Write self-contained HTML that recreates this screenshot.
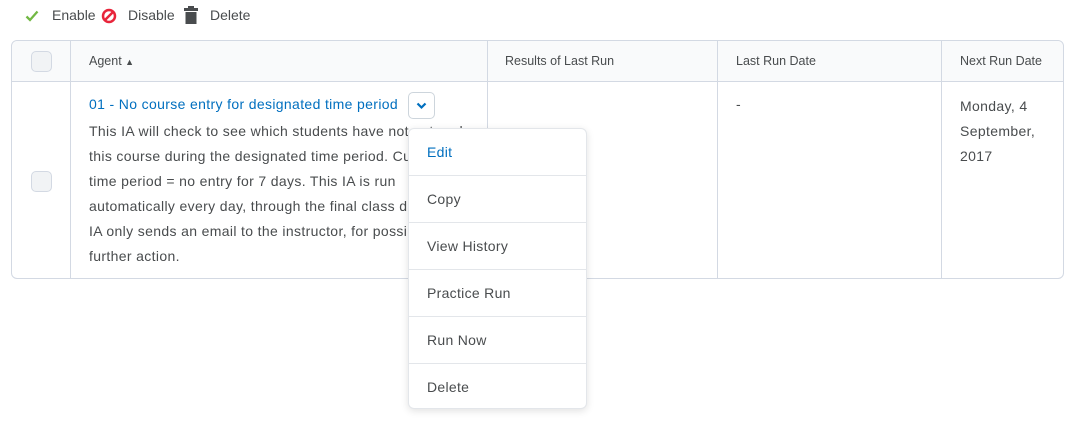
<!DOCTYPE html>
<html><head><style>
body{margin:0;width:1078px;height:425px;background:#fff;font-family:"Liberation Sans",sans-serif;color:#494c4e;position:relative;overflow:hidden;font-size:14px}
.a{position:absolute;white-space:nowrap}
.tb{position:absolute;left:11px;top:40px;width:1051px;height:237px;border:1px solid #d3d9e3;border-radius:6px}
.vl{position:absolute;top:0;bottom:0;width:1px;background:#d3d9e3}
.hl{position:absolute;left:0;right:0;top:40px;height:1px;background:#d3d9e3}
.hd{position:absolute;top:0;height:40px;background:#f9fafb}
.cb{position:absolute;width:19px;height:19px;border:1px solid #d3d9e3;border-radius:5px;background:#f1f3f5}
.th{font-size:12.5px;color:#494c4e}
.sp{letter-spacing:0.35px}
.menu{position:absolute;left:408px;top:128px;width:177px;height:279px;background:#fff;border:1px solid #e3e6ea;border-radius:6px;box-shadow:0 2px 8px rgba(0,0,0,.12)}
.mi{height:46px;border-bottom:1px solid #e3e6ea;line-height:46px;padding-left:18px;font-size:14px;letter-spacing:0.3px}
.mi:last-child{border-bottom:none}
</style></head><body>
<svg class="a" style="left:25px;top:10px" width="14" height="12" viewBox="0 0 14 12"><path d="M1.5 6.5l3.5 3.5 7.5-8.5" fill="none" stroke="#72b844" stroke-width="2.3"/></svg>
<div class="a" style="left:52px;top:7px">Enable</div>
<svg class="a" style="left:101px;top:8px" width="16" height="16" viewBox="0 0 16 16"><circle cx="8" cy="8" r="6" fill="none" stroke="#e8253b" stroke-width="2.5"/><path d="M4 12L12 4" stroke="#e8253b" stroke-width="2.5"/></svg>
<div class="a" style="left:128px;top:7px">Disable</div>
<svg class="a" style="left:184px;top:6px" width="14" height="18" viewBox="0 0 14 18"><rect x="4" y="0" width="6" height="3" fill="#494c4e"/><rect x="0" y="2" width="14" height="3" fill="#494c4e"/><rect x="1.5" y="6" width="11" height="12" fill="#494c4e"/></svg>
<div class="a" style="left:210px;top:7px">Delete</div>
<div class="tb">
<div class="hd" style="left:0;right:0;border-radius:6px 6px 0 0"></div>
<div class="hl"></div>
<div class="vl" style="left:58px"></div><div class="vl" style="left:475px"></div><div class="vl" style="left:705px"></div><div class="vl" style="left:929px"></div>
<div class="cb" style="left:19px;top:10px"></div>
<div class="cb" style="left:19px;top:130px"></div>
<div class="a th" style="left:77px;top:13px">Agent <span style="font-size:9px">&#9650;</span></div>
<div class="a th" style="left:493px;top:13px">Results of Last Run</div>
<div class="a th" style="left:724px;top:13px">Last Run Date</div>
<div class="a th" style="left:948px;top:13px">Next Run Date</div>
<div class="a sp" style="left:77px;top:55px;color:#006fbf">01 - No course entry for designated time period</div>
<div class="a" style="left:396px;top:51px;width:25px;height:25px;border:1px solid #cdd5dc;border-radius:5px"><svg style="position:absolute;left:7px;top:9px" width="11" height="8" viewBox="0 0 11 8"><path d="M1.5 1.5l4 4 4-4" fill="none" stroke="#006fbf" stroke-width="2.2"/></svg></div>
<div class="a sp" style="left:77px;top:78px;line-height:25px">This IA will check to see which students have not entered<br>this course during the designated time period. Current<br>time period = no entry for 7 days. This IA is run<br>automatically every day, through the final class day. This<br>IA only sends an email to the instructor, for possible<br>further action.</div>
<div class="a" style="left:724px;top:55px">-</div>
<div class="a sp" style="left:948px;top:53px;line-height:25px">Monday, 4<br>September,<br>2017</div>
</div>
<div class="menu">
<div class="mi" style="color:#006fbf">Edit</div>
<div class="mi">Copy</div>
<div class="mi">View History</div>
<div class="mi">Practice Run</div>
<div class="mi">Run Now</div>
<div class="mi">Delete</div>
</div>
</body></html>
